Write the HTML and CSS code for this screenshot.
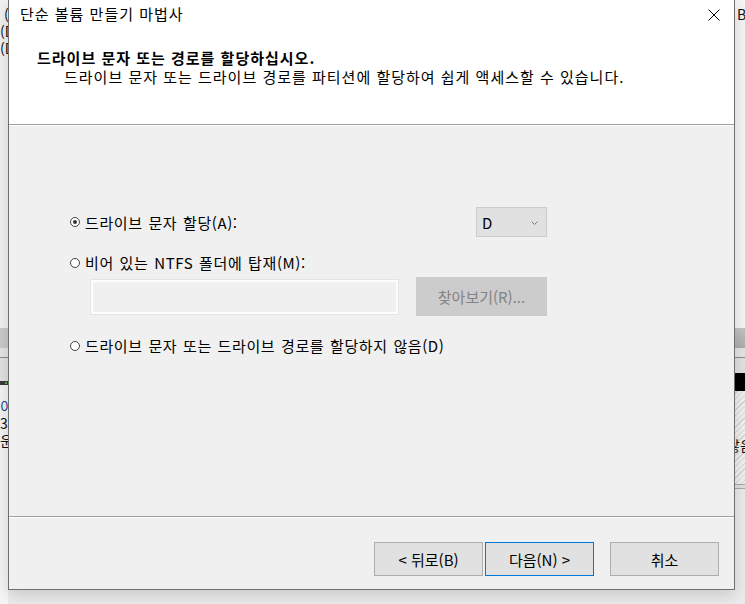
FILE: index.html
```html
<!DOCTYPE html>
<html lang="ko">
<head>
  <meta charset="UTF-8" />
  <meta name="viewport" content="width=device-width, initial-scale=1.0" />
  <title>단순 볼륨 만들기 마법사</title>
  <link rel="stylesheet" href="styles.css">
</head>
<body>
  <div class="desktop">
    <!-- window behind the wizard, only its edges show -->
    <div class="behind behind-left">
      <div class="bl-top">
        <div class="frag">&nbsp;(</div>
        <div class="frag">(D</div>
        <div class="frag">(D</div>
      </div>
      <div class="bl-band"></div>
      <div class="bl-gap"></div>
      <div class="bl-line"></div>
      <div class="bl-light"></div>
      <div class="bl-dark"><span class="led"></span></div>
      <div class="bl-bottom">
        <div class="frag frag-blue">이</div>
        <div class="frag">38</div>
        <div class="frag">운</div>
      </div>
    </div>
    <div class="behind behind-right">
      <div class="br-top"><div class="frag">B</div></div>
      <div class="br-band"></div>
      <div class="bl-gap"></div>
      <div class="bl-line"></div>
      <div class="br-light"></div>
      <div class="br-black"></div>
      <div class="br-hatch"><div class="frag">않음</div></div>
      <div class="br-rule"></div>
      <div class="br-bottom"></div>
    </div>

    <div class="wizard">
      <div class="titlebar">
        <span class="title">단순 볼륨 만들기 마법사</span>
        <svg class="close" width="12" height="12" viewBox="0 0 12 12">
          <path d="M0.5 0.5 L11.5 11.5 M11.5 0.5 L0.5 11.5" stroke="#000" stroke-width="1" fill="none" />
        </svg>
      </div>
      <div class="header">
        <div class="header-title">드라이브 문자 또는 경로를 할당하십시오.</div>
        <div class="header-sub">드라이브 문자 또는 드라이브 경로를 파티션에 할당하여 쉽게 액세스할 수 있습니다.</div>
      </div>
      <div class="rule"></div>

      <div class="content">
        <div class="options">
          <div class="row row-letter">
            <label class="radio"><span class="mark checked"></span>드라이브 문자 할당(A):</label>
            <div class="combo">
              <span>D</span>
              <svg width="7" height="4" viewBox="0 0 7 4">
                <path d="M0.5 0.5 L3.5 3.5 L6.5 0.5" stroke="#7a7a7a" stroke-width="1" fill="none" />
              </svg>
            </div>
          </div>
          <div class="row row-mount">
            <label class="radio"><span class="mark"></span>비어 있는 NTFS 폴더에 탑재(M):</label>
          </div>
          <div class="row row-folder">
            <div class="textbox"></div>
            <div class="btn btn-disabled">찾아보기(R)...</div>
          </div>
          <div class="row row-none">
            <label class="radio"><span class="mark"></span>드라이브 문자 또는 드라이브 경로를 할당하지 않음(D)</label>
          </div>
        </div>
      </div>

      <div class="rule"></div>
      <div class="footer">
        <div class="btn">&lt; 뒤로(B)</div>
        <div class="btn btn-default">다음(N) &gt;</div>
        <div class="btn btn-cancel">취소</div>
      </div>
    </div>
  </div>
</body>
</html>
```

FILE: styles.css
```css
* {
  box-sizing: border-box;
}
body {
  margin: 0;
  background-color: #f0f0f0;
  font-family: "Noto Sans CJK KR", "Noto Sans", sans-serif;
  font-size: 15px;
  color: #000;
}
.desktop {
  position: relative;
  width: 745px;
  height: 604px;
  overflow: hidden;
  background-color: #ececec;
}

/* background window edges */
.behind {
  position: absolute;
  top: 0;
  height: 604px;
  overflow: hidden;
  display: flex;
  flex-direction: column;
  background-color: #f4f4f4;
}
.behind-left {
  left: 0;
  width: 8px;
}
.behind-right {
  left: 727px;
  width: 18px;
}
.frag {
  font-size: 14px;
  line-height: 17px;
  white-space: nowrap;
  color: #111;
}
.frag-blue {
  color: #1a3f8a;
}
.bl-top {
  height: 328px;
  padding-top: 6px;
  background-color: #f3f3f3;
}
.bl-band {
  height: 20px;
  background-color: #cbcbcb;
}
.bl-gap {
  height: 9px;
  background-color: #e6e6e6;
}
.bl-line {
  height: 1px;
  background-color: #8c8c8c;
}
.bl-light {
  height: 23px;
  background-color: #e3e3e3;
}
.bl-dark {
  height: 4px;
  background-color: #3a3a3a;
  position: relative;
}
.led {
  position: absolute;
  left: 5px;
  top: 1px;
  width: 2px;
  height: 2px;
  background-color: #3fbf3f;
}
.bl-bottom {
  flex: 1;
  padding-top: 13px;
  background-color: #f6f6f6;
}
.br-top {
  height: 328px;
  padding: 6px 0 0 10px;
  background-color: #f7f7f7;
}
.br-band {
  height: 20px;
  background: linear-gradient(#c4c4c4, #adadad);
}
.br-light {
  height: 15px;
  background-color: #e2e2e2;
}
.br-black {
  height: 18px;
  background-color: #000;
}
.br-hatch {
  height: 93px;
  padding-top: 46px;
  background-color: #f2f2f2;
  background-image: repeating-linear-gradient(135deg, #f2f2f2 0, #f2f2f2 3px, #d6d6d6 3px, #d6d6d6 4px);
}
.br-rule {
  height: 5px;
  border-top: 1px solid #a8a8a8;
  border-bottom: 1px solid #a8a8a8;
  background-color: #e0e0e0;
}
.br-bottom {
  flex: 1;
  background-color: #ececec;
}

/* wizard dialog */
.wizard {
  position: absolute;
  left: 8px;
  top: -1px;
  width: 727px;
  height: 591px;
  border: 1px solid #6f6f6f;
  background-color: #f0f0f0;
  display: flex;
  flex-direction: column;
  box-shadow: 0 5px 16px rgba(0, 0, 0, 0.16);
}
.titlebar {
  height: 31px;
  flex: none;
  background-color: #fff;
  display: flex;
  justify-content: space-between;
  align-items: flex-start;
  padding: 0 14px 0 11px;
}
.title {
  line-height: 19px;
  padding-top: 4px;
  letter-spacing: 1px;
}
.close {
  margin-top: 9px;
}
.header {
  height: 93px;
  flex: none;
  background-color: #fff;
  padding: 17px 0 0 28px;
  line-height: 19px;
  letter-spacing: 1px;
}
.header-title {
  font-weight: bold;
}
.header-sub {
  padding-left: 27px;
}
.rule {
  flex: none;
  height: 2px;
  border-top: 1px solid #a0a0a0;
  border-bottom: 1px solid #fff;
}
.content {
  flex: 1;
  padding: 81px 0 0 61px;
}
.options {
  width: 477px;
}
.row {
  display: flex;
  align-items: center;
}
.row-letter {
  height: 30px;
  justify-content: space-between;
}
.row-mount {
  margin-top: 16px;
}
.row-folder {
  margin-top: 5px;
  height: 39px;
  padding-left: 21px;
}
.row-none {
  margin-top: 20px;
}
.radio {
  display: flex;
  align-items: center;
  line-height: 19px;
  letter-spacing: 0.6px;
  word-spacing: 1px;
}
.mark {
  width: 10px;
  height: 10px;
  border: 1px solid #444;
  border-radius: 50%;
  background-color: #fff;
  margin-right: 5px;
  display: flex;
  align-items: center;
  justify-content: center;
}
.mark.checked::after {
  content: "";
  width: 4px;
  height: 4px;
  border-radius: 50%;
  background-color: #333;
}
.combo {
  width: 71px;
  height: 30px;
  border: 1px solid #cccccc;
  background-color: #e1e1e1;
  display: flex;
  align-items: center;
  justify-content: space-between;
  padding: 0 8px 0 5px;
}
.combo svg {
  margin-top: 1px;
}
.textbox {
  width: 307px;
  height: 34px;
  border: 2px solid #fdfdfd;
  box-shadow: 0 0 0 1px #e4e4e4;
  background-color: #f0f0f0;
}
.btn {
  width: 109px;
  height: 34px;
  border: 1px solid #adadad;
  background-color: #e1e1e1;
  display: flex;
  align-items: center;
  justify-content: center;
  line-height: 19px;
}
.btn-disabled {
  width: 131px;
  height: 39px;
  margin-left: 18px;
  border-color: #cccccc;
  background-color: #cccccc;
  color: #838383;
}
.footer {
  flex: none;
  height: 71px;
  display: flex;
  justify-content: flex-end;
  align-items: flex-start;
  padding: 24px 15px 0 0;
}
.btn-default {
  margin-left: 2px;
  border-color: #0078d7;
}
.btn-cancel {
  margin-left: 16px;
}
```
